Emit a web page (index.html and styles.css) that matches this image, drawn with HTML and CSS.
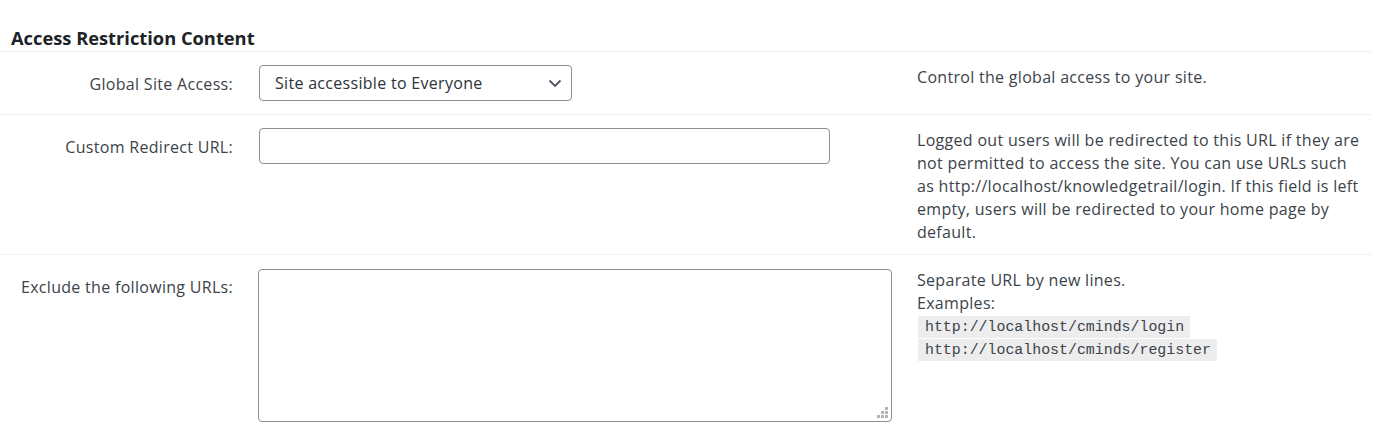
FILE: index.html
```html
<!DOCTYPE html>
<html lang="en">
<head>
<meta charset="utf-8">
<title>Access Restriction Content</title>
<link rel="stylesheet" href="styles.css">
</head>
<body>
<div class="page">
  <h2 class="section-title">Access Restriction Content</h2>
  <div class="form-table">
    <div class="row">
      <div class="label">Global Site Access:</div>
      <div class="control">
        <div class="select">
          <span>Site accessible to Everyone</span>
          <svg class="chev" width="14" height="9" viewBox="0 0 14 9"><path d="M1.5 1.5 L7 7 L12.5 1.5" fill="none" stroke="#50575e" stroke-width="1.8"/></svg>
        </div>
      </div>
      <div class="desc">Control the global access to your site.</div>
    </div>
    <div class="row">
      <div class="label">Custom Redirect URL:</div>
      <div class="control">
        <input class="text-input" type="text">
      </div>
      <div class="desc">Logged out users will be redirected to this URL if they are not permitted to access the site. You can use URLs such as http://localhost/knowledgetrail/login. If this field is left empty, users will be redirected to your home page by default.</div>
    </div>
    <div class="row last">
      <div class="label">Exclude the following URLs:</div>
      <div class="control">
        <div class="textarea-wrap">
          <textarea class="textarea"></textarea>
          <svg class="grip" width="12" height="12" viewBox="0 0 12 12">
            <rect x="8" y="0" width="3" height="3" fill="#b4b4b4"/>
            <rect x="4" y="4" width="3" height="3" fill="#b4b4b4"/>
            <rect x="8" y="4" width="3" height="3" fill="#b4b4b4"/>
            <rect x="0" y="8" width="3" height="3" fill="#b4b4b4"/>
            <rect x="4" y="8" width="3" height="3" fill="#b4b4b4"/>
            <rect x="8" y="8" width="3" height="3" fill="#b4b4b4"/>
          </svg>
        </div>
      </div>
      <div class="desc">Separate URL by new lines.<br>Examples:<code>http://localhost/cminds/login</code><code>http://localhost/cminds/register</code></div>
    </div>
  </div>
</div>
</body>
</html>
```

FILE: styles.css
```css
html, body {
  margin: 0;
  padding: 0;
  background: #ffffff;
}
body {
  font-family: "Segoe UI", "Open Sans", sans-serif;
  font-size: 16px;
  letter-spacing: 0.3px;
  line-height: 23px;
  color: #3c434a;
}
.page {
  width: 1372px;
}
.section-title {
  margin: 0;
  padding: 25px 0 0 11px;
  height: 26px;
  font-size: 18.3px;
  letter-spacing: 0;
  line-height: 26px;
  font-weight: 700;
  color: #1d2327;
}
.form-table {
  border-top: 1px solid #f0f0f0;
}
.row {
  display: flex;
  border-bottom: 1px solid #f0f0f0;
}
.row.last {
  border-bottom: none;
}
.label {
  width: 233px;
  flex: none;
  text-align: right;
  padding: 21px 26px 0 0;
}
.control {
  width: 648px;
  flex: none;
  padding: 13px 0 13px 0;
}
.desc {
  flex: 1;
  padding: 14px 10px 10px 10px;
}
.select {
  width: 313px;
  height: 36px;
  box-sizing: border-box;
  border: 1px solid #8c8f94;
  border-radius: 4px;
  display: flex;
  align-items: center;
  justify-content: space-between;
  padding: 0 9px 0 15px;
  color: #2c3338;
}
.chev {
  display: block;
}
.text-input {
  display: block;
  width: 571px;
  height: 36px;
  box-sizing: border-box;
  border: 1px solid #8c8f94;
  border-radius: 4px;
  margin: 0;
  font: inherit;
}
.textarea-wrap {
  position: relative;
  width: 634px;
  margin: 1px 0 0 -1px;
}
.textarea {
  display: block;
  width: 634px;
  height: 153px;
  box-sizing: border-box;
  border: 1px solid #8c8f94;
  border-radius: 4px;
  margin: 0;
  font: inherit;
  resize: none;
}
.grip {
  position: absolute;
  right: 3px;
  bottom: 3px;
}
code {
  display: block;
  width: fit-content;
  font-family: "Liberation Mono", monospace;
  font-size: 14.9px;
  letter-spacing: 0;
  line-height: 22px;
  background: #ededed;
  padding: 0 6px 0 7px;
  margin: 1px 0 1px 1px;
  color: #3c434a;
}
```
